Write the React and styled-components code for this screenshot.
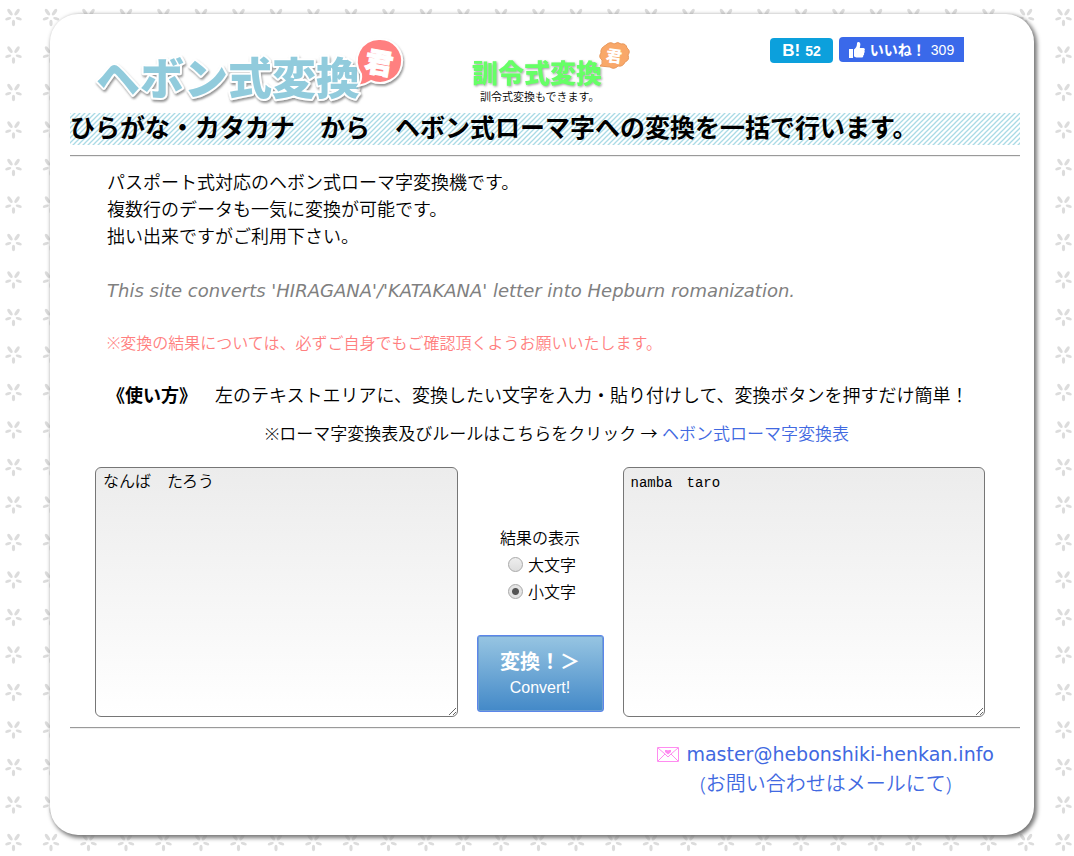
import React, { useState } from 'react';
import styled, { createGlobalStyle } from 'styled-components';

const flower = (x, y) => `
    <g transform="translate(${x} ${y})" fill="#dcdcdc">
        <ellipse cy="6" rx="1.6" ry="3.2"/>
        <ellipse cy="5.5" rx="1.4" ry="3.2" transform="rotate(72)"/>
        <ellipse cy="5.5" rx="1.4" ry="3.2" transform="rotate(-72)"/>
        <ellipse cy="6" rx="1.7" ry="3.8" transform="rotate(144)"/>
        <ellipse cy="6" rx="1.7" ry="3.8" transform="rotate(-144)"/>
    </g>`;

const tile = `<svg xmlns="http://www.w3.org/2000/svg" width="75" height="75">
    ${flower(13.5, 17)}${flower(51, 17)}${flower(13.5, 54.5)}${flower(51, 54.5)}
</svg>`;

const stripes = `<svg xmlns="http://www.w3.org/2000/svg" width="5" height="5">
    <path d="M-1 1L1 -1M-1 6L6 -1M4 6L6 4" stroke="#a9dae5" stroke-width="1.3"/>
</svg>`;

const toUrl = (svg) => `url("data:image/svg+xml,${encodeURIComponent(svg)}")`;

const GlobalStyle = createGlobalStyle`
    * {
        box-sizing: border-box;
    }

    body {
        margin: 0;
        background: #fff ${toUrl(tile)};
        color: #000;
        font-family: "Noto Sans", "Noto Sans CJK JP", sans-serif;
        font-size: 18px;
        font-weight: 350;
        line-height: 27px;
        text-spacing-trim: space-all;
    }

    b {
        font-weight: 700;
    }
`;

const Card = styled.div`
    display: flow-root;
    margin: 14px 40px 20px 50px;
    padding: 23px 14px 36px 20px;
    background-color: #fff;
    border-radius: 28px;
    box-shadow: 2px 2px 4px 1px #777;
`;

const Header = styled.header`
    display: flex;
    align-items: flex-start;
    height: 76px;
    padding: 0 56px 0 20px;
`;

const Logo = styled.svg`
    display: block;
    flex: none;
    overflow: visible;
    font-family: "Noto Sans CJK JP", sans-serif;
    font-weight: 900;
`;

const SubLogo = styled.a`
    margin-left: 60px;
    color: #000;
    text-decoration: none;
`;

const Caption = styled.span`
    display: block;
    padding-left: 10px;
    font-size: 11px;
    line-height: 16px;
`;

const SocialBar = styled.div`
    display: flex;
    gap: 6px;
    margin-left: auto;
    font-family: "Liberation Sans", "Noto Sans CJK JP", sans-serif;
`;

const SocialButton = styled.button`
    display: flex;
    align-items: center;
    justify-content: center;
    gap: 5px;
    width: ${props => props.$width};
    height: 25px;
    margin-top: ${props => props.$top || 0};
    padding: 0;
    border: 0;
    border-radius: ${props => props.$radius};
    background-color: ${props => props.$color};
    color: #fff;
    font-family: inherit;
    font-size: 14px;
    line-height: 20px;
    white-space: nowrap;
    cursor: pointer;
`;

const HatenaMark = styled.b`
    font-size: 17px;
`;

const Title = styled.h1`
    margin: 0;
    padding-bottom: 4px;
    background: ${toUrl(stripes)};
    font-size: 25px;
    font-weight: 700;
    line-height: 28px;
`;

const Rule = styled.hr`
    margin: 10px 0;
    border: 0;
    border-top: 1px solid #9a9a9a;
    border-bottom: 1px solid #eee;
`;

const Intro = styled.div`
    padding: 2px 0 0 37px;

    p {
        margin: 0 0 27px;
    }
`;

const English = styled.p`
    color: #808080;
    font-family: "DejaVu Sans", sans-serif;
    font-style: italic;
    font-weight: 400;
`;

const Notice = styled.p`
    color: #ff7f7f;
    font-size: 16px;
    line-height: 24px;
`;

const RuleLink = styled.div`
    margin: -16px 0 20px;
    padding-left: 24px;
    font-size: 17px;
    text-align: center;
`;

const Link = styled.a`
    color: #4169e1;
    text-decoration: none;
`;

const Form = styled.form`
    display: flex;
    padding: 0 35px 0 25px;
`;

const TextArea = styled.textarea`
    flex: 1;
    min-width: 0;
    height: 250px;
    padding: 5px 7px;
    border: 1px solid #767676;
    border-radius: 6px;
    background: linear-gradient(#ececec, #fff);
    color: #000;
    font-family: "Liberation Mono", "Noto Sans CJK JP", monospace;
    font-size: ${props => props.$size};
    font-weight: 350;
    line-height: 20px;
    outline: none;
`;

const Controls = styled.div`
    display: flex;
    flex-direction: column;
    align-items: center;
    flex: 0 0 165px;
    padding-top: 58px;
    font-size: 16px;
`;

const Choices = styled.fieldset`
    display: flex;
    flex-direction: column;
    align-items: center;
    margin: 0 0 29px;
    padding: 0;
    border: 0;

    legend {
        padding: 0;
    }
`;

const Choice = styled.label`
    display: flex;
    align-items: center;
    gap: 5px;
    padding-left: 4px;
`;

const Radio = styled.input`
    appearance: none;
    width: 15px;
    height: 15px;
    margin: 0 0 3px;
    border: 1px solid #a9a9a9;
    border-radius: 50%;
    background: linear-gradient(#eee, #ddd);

    &:checked {
        background: radial-gradient(circle, #555 0 3px, #e4e4e4 4px);
    }
`;

const ConvertButton = styled.button`
    width: 127px;
    height: 77px;
    padding: 0;
    border: 1px solid #5b86ea;
    border-radius: 3px;
    background: linear-gradient(#97c5e2, #4389c8);
    box-shadow: inset 0 0 0 1px #6f9fd2;
    color: #fff;
    font-family: "Liberation Sans", "Noto Sans CJK JP", sans-serif;
    font-size: 16px;
    line-height: 24px;
    cursor: pointer;

    b {
        display: block;
        font-size: 20px;
        line-height: 28px;
    }
`;

const Footer = styled.footer`
    display: flex;
    justify-content: flex-end;
    padding-right: 26px;
    font-size: 20px;
    line-height: 30px;
    text-align: center;

    svg {
        margin-right: 7px;
        vertical-align: -1px;
    }
`;

const Address = styled.span`
    font-family: "DejaVu Sans", sans-serif;
    font-size: 19px;
    font-weight: 400;
`;

const HepburnLogo = () => (
    <Logo width="320" height="76" viewBox="0 0 320 76" role="img" aria-label="ヘボン式変換君">
        <defs>
            <filter id="shadow" x="-10%" y="-10%" width="120%" height="130%">
                <feDropShadow dx="1" dy="2" stdDeviation="1" floodColor="#777" floodOpacity="0.8" />
            </filter>
            <filter id="softShadow" x="-10%" y="-10%" width="120%" height="130%">
                <feDropShadow dx="1" dy="1" stdDeviation="1" floodColor="#777" floodOpacity="0.7" />
            </filter>
        </defs>
        <text x="6" y="58" fontSize="44" fill="#91cbdc" stroke="#fff" strokeWidth="4" strokeLinejoin="round" paintOrder="stroke" filter="url(#shadow)">ヘボン式変換</text>
        <path d="M289 2a22 22 0 1 1-8 42q-6 4-13 5q4-6 3-12a22 22 0 0 1 18-35z" fill="#ff8080" stroke="#fff" strokeWidth="2" filter="url(#shadow)" />
        <text x="275" y="36" fontSize="28" fill="#fff" stroke="#fff" transform="rotate(10 289 26)">君</text>
    </Logo>
);

const KunreiLogo = () => (
    <Logo width="160" height="52" viewBox="0 0 160 52" role="img" aria-label="訓令式変換君">
        <text x="2" y="46" fontSize="26" fill="#66ff66" filter="url(#softShadow)">訓令式変換</text>
        <path d="M136 8q4-4 8-1q4-3 7 0q5-1 6 4q4 3 1 7q2 5-3 7q-2 5-7 4q-4 4-8 1l-10-1q3-2 2-6q-4-3-1-7q-1-5 5-8z" fill="#f9a869" stroke="#e8985c" strokeWidth="1" />
        <text x="136" y="25" fontSize="16" fill="#fff" transform="rotate(8 144 19)">君</text>
    </Logo>
);

const Thumb = () => (
    <svg width="16" height="16" viewBox="0 0 16 16" fill="#fff" aria-hidden="true">
        <path d="M0 7h4v9H0zM5 7.5C7 6 8 4 8 1.5C8 .5 8.600 0 9.500 0C11 0 11.500 1.500 11.300 3L10.800 6H14.500C16 6 16.300 8 15.300 8.700C16 9.500 15.800 10.700 15 11.200C15.400 12.200 15 13.200 14.200 13.600C14.400 14.800 13.600 15.500 12.500 15.500H8.500C7 15.500 6 15 5 14.500z" />
    </svg>
);

const Envelope = () => (
    <svg width="22" height="15" viewBox="0 0 22 15" fill="none" stroke="#ff8cf0" aria-hidden="true">
        <path d="M.5 .5h21v14H.5zM1 1l7 6M21 1l-7 6M1 14l7-7l3 3l3-3l7 7" />
        <path d="M11 7.500L8 5V3H10.500L11 4L11.500 3H14V5z" fill="#ff8cf0" stroke="none" />
    </svg>
);

const App = () => {

    const [letterCase, setLetterCase] = useState('lower');
    const [source, setSource] = useState('なんば　たろう');
    const [result, setResult] = useState('namba　taro');

    const convert = (e) => {
        e.preventDefault();
        setResult(letterCase === 'upper' ? result.toUpperCase() : result.toLowerCase());
    }

    return (
        <>
        <GlobalStyle />
        <Card>
            <Header>
                <HepburnLogo />
                <SubLogo href="#kunrei">
                    <KunreiLogo />
                    <Caption>訓令式変換もできます。</Caption>
                </SubLogo>
                <SocialBar>
                    <SocialButton $width="63px" $radius="4px" $color="#0ca0dc" $top="1px">
                        <HatenaMark>B!</HatenaMark>
                        <b>52</b>
                    </SocialButton>
                    <SocialButton $width="125px" $radius="4px 0 0 4px" $color="#3a69ea">
                        <Thumb />
                        <b>いいね！</b>
                        <span>309</span>
                    </SocialButton>
                </SocialBar>
            </Header>
            <Title>ひらがな・カタカナ　から　ヘボン式ローマ字への変換を一括で行います。</Title>
            <Rule />
            <Intro>
                <p>
                    パスポート式対応のヘボン式ローマ字変換機です。<br />
                    複数行のデータも一気に変換が可能です。<br />
                    拙い出来ですがご利用下さい。
                </p>
                <English>This site converts 'HIRAGANA'/'KATAKANA' letter into Hepburn romanization.</English>
                <Notice>※変換の結果については、必ずご自身でもご確認頂くようお願いいたします。</Notice>
                <p><b>《使い方》</b>　左のテキストエリアに、変換したい文字を入力・貼り付けして、変換ボタンを押すだけ簡単！</p>
            </Intro>
            <RuleLink>
                ※ローマ字変換表及びルールはこちらをクリック → <Link href="#table">ヘボン式ローマ字変換表</Link>
            </RuleLink>
            <Form onSubmit={convert}>
                <TextArea $size="16px" aria-label="変換したい文字" value={source} onChange={(e) => setSource(e.target.value)} />
                <Controls>
                    <Choices>
                        <legend>結果の表示</legend>
                        <Choice>
                            <Radio type="radio" name="case" checked={letterCase === 'upper'} onChange={() => setLetterCase('upper')} />
                            大文字
                        </Choice>
                        <Choice>
                            <Radio type="radio" name="case" checked={letterCase === 'lower'} onChange={() => setLetterCase('lower')} />
                            小文字
                        </Choice>
                    </Choices>
                    <ConvertButton type="submit">
                        <b>変換！＞</b>
                        Convert!
                    </ConvertButton>
                </Controls>
                <TextArea $size="14px" aria-label="変換結果" value={result} onChange={(e) => setResult(e.target.value)} />
            </Form>
            <Rule />
            <Footer>
                <Link href="mailto:master@hebonshiki-henkan.info">
                    <Envelope /><Address>master@hebonshiki-henkan.info</Address><br />
                    (お問い合わせはメールにて)
                </Link>
            </Footer>
        </Card>
        </>
    )
}


export default App;
